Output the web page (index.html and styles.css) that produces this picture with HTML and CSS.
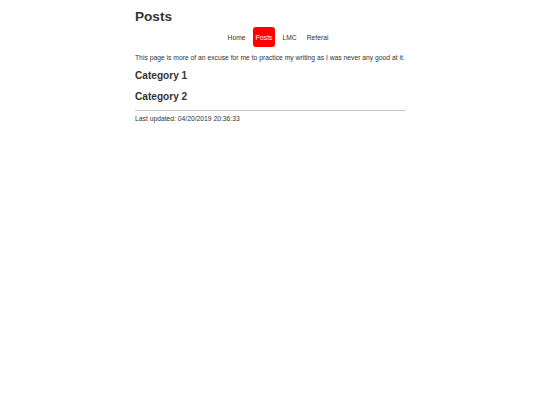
FILE: index.html
```html
<!DOCTYPE html>
<html>
<head>
<meta charset="utf-8">
<link rel="stylesheet" href="styles.css">
</head>
<body>
<div class="page">
  <h1 class="title">Posts</h1>
  <nav class="nav">
    <a class="nav-item" href="#">Home</a>
    <a class="nav-item active" href="#">Posts</a>
    <a class="nav-item" href="#">LMC</a>
    <a class="nav-item" href="#">Referal</a>
  </nav>
  <p class="intro">This page is more of an excuse for me to practice my writing as I was never any good at it.</p>
  <h2 class="cat">Category 1</h2>
  <h2 class="cat">Category 2</h2>
  <hr class="rule">
  <p class="updated">Last updated: 04/20/2019 20:36:33</p>
</div>
</body>
</html>
```
FILE: styles.css
```css
html, body {
  margin: 0;
  padding: 0;
  background: #fff;
}
body {
  font-family: "Liberation Sans", Arial, sans-serif;
  color: #333;
}
.page {
  width: 270px;
  margin: 0 auto;
  padding-top: 8px;
}
.title {
  font-size: 13.6px;
  font-weight: bold;
  margin: 0;
  line-height: 17px;
}
.nav {
  display: flex;
  justify-content: center;
  align-items: center;
  padding-left: 16px;
  margin-top: 2px;
}
.nav-item {
  font-size: 6.75px;
  color: #333;
  text-decoration: none;
  padding: 6.5px 3px 5.5px;
  margin: 0 2px;
  line-height: 8px;
  border-radius: 3px;
}
.nav-item.active {
  background: #ff0000;
  color: #fff;
}
.intro {
  font-size: 6.75px;
  margin: 7px 0 0;
  line-height: 8px;
  white-space: nowrap;
}
.cat {
  font-size: 10.1px;
  font-weight: bold;
  margin: 7px 0 0;
  line-height: 13px;
}
.cat + .cat {
  margin-top: 8px;
}
.rule {
  border: 0;
  border-top: 1px solid #c4c4c4;
  margin: 7px 0 0;
}
.updated {
  font-size: 6.75px;
  margin: 4px 0 0;
  line-height: 8px;
}
```
